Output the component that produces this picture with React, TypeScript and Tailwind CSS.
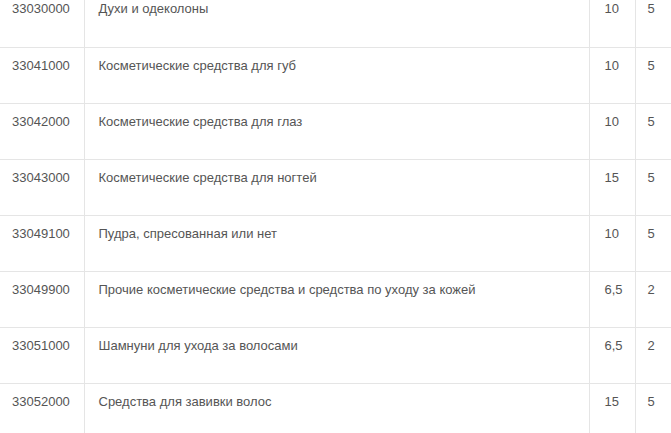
import React from "react";

const rows = [
  { code: "33030000", name: "Духи и одеколоны", duty: "10", vat: "5" },
  { code: "33041000", name: "Косметические средства для губ", duty: "10", vat: "5" },
  { code: "33042000", name: "Косметические средства для глаз", duty: "10", vat: "5" },
  { code: "33043000", name: "Косметические средства для ногтей", duty: "15", vat: "5" },
  { code: "33049100", name: "Пудра, спресованная или нет", duty: "10", vat: "5" },
  {
    code: "33049900",
    name: "Прочие косметические средства и средства по уходу за кожей",
    duty: "6,5",
    vat: "2",
  },
  { code: "33051000", name: "Шамнуни для ухода за волосами", duty: "6,5", vat: "2" },
  { code: "33052000", name: "Средства для завивки волос", duty: "15", vat: "5" },
];

export default function App() {
  return (
    <div
      className="w-[671px] h-[433px] overflow-hidden bg-white text-[13px] leading-[18px] text-[#555]"
      style={{ fontFamily: '"Liberation Sans", Arial, sans-serif' }}
    >
      <table className="-mt-[9px] w-[671px] border-collapse table-fixed">
        <colgroup>
          <col className="w-[84px]" />
          <col className="w-[505px]" />
          <col className="w-[46px]" />
          <col />
        </colgroup>
        <tbody>
          {rows.map((r) => (
            <tr key={r.code} className="h-[56px] border-b border-[#e5e5e5] align-top">
              <td className="pl-[12px] pt-[9px] border-r border-[#e5e5e5]">{r.code}</td>
              <td className="pl-[14px] pt-[9px] border-r border-[#e5e5e5]">{r.name}</td>
              <td className="pl-[15px] pt-[9px] border-r border-[#e5e5e5]">{r.duty}</td>
              <td className="pl-[12px] pt-[9px]">{r.vat}</td>
            </tr>
          ))}
        </tbody>
      </table>
    </div>
  );
}
